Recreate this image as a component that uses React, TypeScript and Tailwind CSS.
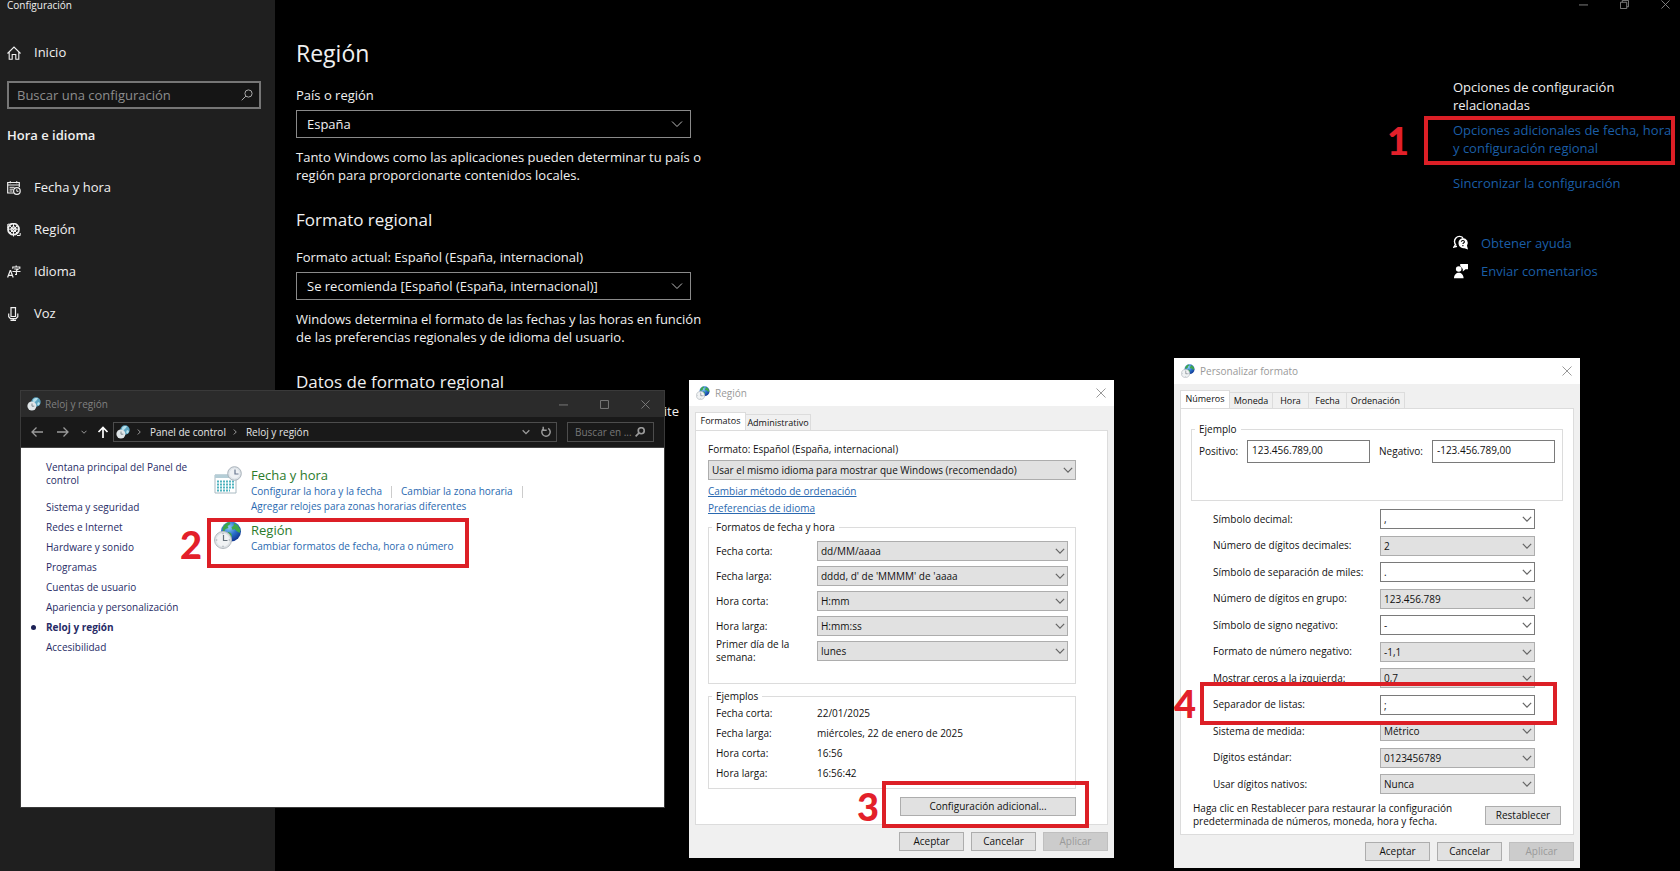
import React from 'react';
import clsx from 'clsx';

interface IconProps {
  className?: string;
}

interface Row {
  id: string;
  label: string;
  value: string;
  editable?: boolean;
}

const dateFormats: Row[] = [
  { id: 'short-date', label: 'Fecha corta:', value: 'dd/MM/aaaa' },
  { id: 'long-date', label: 'Fecha larga:', value: "dddd, d' de 'MMMM' de 'aaaa" },
  { id: 'short-time', label: 'Hora corta:', value: 'H:mm' },
  { id: 'long-time', label: 'Hora larga:', value: 'H:mm:ss' },
  { id: 'first-day', label: 'Primer día de la semana:', value: 'lunes' },
];

const examples = [
  ['Fecha corta:', '22/01/2025'],
  ['Fecha larga:', 'miércoles, 22 de enero de 2025'],
  ['Hora corta:', '16:56'],
  ['Hora larga:', '16:56:42'],
];

const numberFormats: Row[] = [
  { id: 'decimal', label: 'Símbolo decimal:', value: ',', editable: true },
  { id: 'digits', label: 'Número de dígitos decimales:', value: '2' },
  { id: 'thousands', label: 'Símbolo de separación de miles:', value: '.', editable: true },
  { id: 'grouping', label: 'Número de dígitos en grupo:', value: '123.456.789' },
  { id: 'negative-sign', label: 'Símbolo de signo negativo:', value: '-', editable: true },
  { id: 'negative-format', label: 'Formato de número negativo:', value: '-1,1' },
  { id: 'zeros', label: 'Mostrar ceros a la izquierda:', value: '0,7' },
  { id: 'list-separator', label: 'Separador de listas:', value: ';', editable: true },
  { id: 'measure', label: 'Sistema de medida:', value: 'Métrico' },
  { id: 'standard-digits', label: 'Dígitos estándar:', value: '0123456789' },
  { id: 'native-digits', label: 'Usar dígitos nativos:', value: 'Nunca' },
];

const categories = [
  'Sistema y seguridad',
  'Redes e Internet',
  'Hardware y sonido',
  'Programas',
  'Cuentas de usuario',
  'Apariencia y personalización',
  'Reloj y región',
  'Accesibilidad',
];

/* ---------- icons ---------- */

const Chevron: React.FC<IconProps> = ({ className }) => (
  <svg viewBox="0 0 12 12" className={className} fill="none" stroke="currentColor">
    <path d="M1 3.5 6 8.5 11 3.5" />
  </svg>
);

const Search: React.FC<IconProps> = ({ className }) => (
  <svg viewBox="0 0 12 12" className={className} fill="none" stroke="currentColor">
    <circle cx="7.5" cy="4.5" r="3.6" />
    <path d="M4.9 7.1.7 11.3" />
  </svg>
);

const Minimize = () => (
  <svg viewBox="0 0 10 10" className="size-[9px]" fill="none" stroke="currentColor">
    <path d="M0 5.5h10" />
  </svg>
);

const Maximize = () => (
  <svg viewBox="0 0 10 10" className="size-[9px]" fill="none" stroke="currentColor">
    <path d="M.6.6h8.8v8.8H.6z" />
  </svg>
);

const Restore = () => (
  <svg viewBox="0 0 10 10" className="size-[9px]" fill="none" stroke="currentColor">
    <path d="M.5 2.5h7v7h-7zM2.5 2.5v-2h7v7h-2" />
  </svg>
);

const Close: React.FC<IconProps> = ({ className }) => (
  <svg viewBox="0 0 10 10" className={className} fill="none" stroke="currentColor">
    <path d="M.5.5l9 9M9.5.5l-9 9" />
  </svg>
);

const HomeIcon = () => (
  <svg viewBox="0 0 14 14" className="size-3.5" fill="none" stroke="currentColor" strokeWidth="1.1">
    <path d="M.5 7.5 7 1l6.500 6.500M2.2 6v7.200h3V8.500h3.600v4.700h3V6" />
  </svg>
);

const DateIcon = () => (
  <svg viewBox="0 0 14 14" className="size-3.5" fill="none" stroke="currentColor">
    <path d="M6.5 12H.7V1.500h11.600V6M.7 4h11.600M3.300.3v2M9.700.3v2" strokeWidth="1.2" />
    <path d="M2.500 6.300h5M2.500 8.200h3.500M2.500 10h3" />
    <circle cx="9.9" cy="10" r="3.3" strokeWidth="1.2" />
    <path d="M9.8 8.200V10.300h1.700" />
  </svg>
);

const RegionIcon = () => (
  <svg viewBox="0 0 14 14" className="size-3.5" fill="none" stroke="currentColor">
    <circle cx="6.5" cy="6.2" r="5.5" strokeWidth="1.8" />
    <circle cx="6.5" cy="6.2" r="2.4" strokeWidth="1.3" />
    <path d="M1 1.200h4M.8 1v4M2.500 2.500l8 8M10.500 2.500l-8 8M6.500.7v3.300M6.500 8.500v5M1 6.200h3.200M8.800 6.200H12M10 12.500h3.200v-2.500" />
    <circle cx="6.5" cy="6.2" r=".8" fill="currentColor" />
  </svg>
);

const LanguageIcon = () => (
  <svg viewBox="0 0 14 14" className="size-3.5" fill="none" stroke="currentColor" strokeWidth="1.2">
    <path d="M.6 12.500 3.200 5.500h.4L6.200 12.500M1.500 10.300h3.800" />
    <path d="M9.200.5v1.300M5.800 3.700V2h7v1.700M7.200 4h4L9.300 5.500M5.500 6.500h8M9.400 5.500v4H8" />
  </svg>
);

const MicIcon = () => (
  <svg viewBox="0 0 14 14" className="size-3.5" fill="none" stroke="currentColor" strokeWidth="1.2">
    <path d="M4 .7h4.500v8.800H4zM1.700 6.500v3.200l1.800 1.900H9l1.800-1.900V6.500M6.250 11.600v1.900M3.500 13.400H9" />
  </svg>
);

const HelpIcon = () => (
  <svg viewBox="0 0 16 16" className="size-4">
    <path d="M2.500 9.500 1 12l3-.8M3 10A5 5 0 1 1 10 2.800" fill="none" stroke="#fff" strokeWidth="1.4" />
    <path d="M9.800 3a5 5 0 0 1 4.200 7.700l1 3.800-3.500-1.300A5 5 0 1 1 9.800 3z" fill="#fff" />
    <path d="M8.300 6.800c.2-1.800 3.200-1.600 3.100.1-.1 1-1.500 1-1.500 2.200M9.900 10v1.200" fill="none" stroke="#000" strokeWidth="1.1" />
  </svg>
);

const FeedbackIcon = () => (
  <svg viewBox="0 0 16 16" className="size-4" fill="#fff">
    <circle cx="5.7" cy="6" r="2.8" />
    <path d="M1 15.300c0-7.500 9.600-7.500 9.600 0zM7.200 1H15v5.300h-2.500L9.800 8.500V6L7.200 3z" />
  </svg>
);

const Globe: React.FC<IconProps> = ({ className }) => (
  <svg viewBox="0 0 28 28" className={className}>
    <defs>
      <radialGradient id="sea" cx=".4" cy=".3" r=".75">
        <stop offset="0" stopColor="#8fd0f7" />
        <stop offset=".5" stopColor="#2b72cc" />
        <stop offset="1" stopColor="#0b2f8c" />
      </radialGradient>
    </defs>
    <circle cx="17" cy="10.500" r="10" fill="url(#sea)" />
    <path d="M8.500 7c1.500-4 5-6 7-6l1 2-3 2 1 2-3 1-2 4zM20 2l4 2.500 2.500 4.500-1 3-3-2-2-2-2 1-1-3 2-1zM14 11l3 1 1 3-2 3-2-2z" fill="#3fa84a" />
    <circle cx="9" cy="19" r="8.500" fill="#dfe3e6" stroke="#b3b9be" />
    <circle cx="9" cy="19" r="6.500" fill="#f1f3f4" />
    <path d="M9.500 14v5.500h4" fill="none" stroke="#66717a" strokeWidth="1.2" />
    <path d="M9 11.800v1.500M9 24.700v1.500M1.800 19h1.500M14.700 19h1.500" stroke="#9aa3aa" />
  </svg>
);

// muted variant used in the dark window's title and address bar
const ClockGlobe: React.FC<IconProps> = ({ className }) => (
  <svg viewBox="0 0 14 14" className={className}>
    <circle cx="9" cy="5" r="4.7" fill="#5aa3c0" />
    <path d="M6 3c1-2 4-2.500 5-1.500L9 4 6.500 6zM11 5l2 1-1 2.500-2-1z" fill="#b5dfea" />
    <circle cx="4.9" cy="9" r="4.5" fill="#dfe5e8" />
    <path d="M5 6.500V9.200h2.300" fill="none" stroke="#7e8a92" />
  </svg>
);

const CalendarClock = () => (
  <svg viewBox="0 0 28 28" className="size-7">
    <path d="M1 9h21v18H1z" fill="#fff" stroke="#a9bac2" />
    <path d="M1 8.500h21v3.500H1z" fill="#b4cdd6" />
    <path d="M3 15.500h17M3 18.500h17M3 21.500h17M3 24.500h13" stroke="#4fb3bf" strokeWidth="2" strokeDasharray="2 1" />
    <circle cx="20.5" cy="7.5" r="6.8" fill="#dde3e8" stroke="#a9b2ba" />
    <circle cx="20.5" cy="7.5" r="5" fill="#eef1f4" />
    <path d="M21 3.500V8h3.500" fill="none" stroke="#6a7890" strokeWidth="1.2" />
  </svg>
);

const Refresh = () => (
  <svg viewBox="0 0 12 12" className="size-3" fill="none" stroke="currentColor" strokeWidth="1.5">
    <path d="M4 2.300a4.200 4.200 0 1 0 4.200.1M3.200.8v3.400h3.500" />
  </svg>
);

/* ---------- shared parts ---------- */

interface CalloutProps {
  number: string;
  box: string;
  label: string;
}

const Callout: React.FC<CalloutProps> = ({ number, box, label }) => (
  <>
    <span className={clsx('pointer-events-none absolute z-10 border-4 border-[#dc1f26]', box)} />
    <span className={clsx("pointer-events-none absolute z-10 font-['Lato',sans-serif] text-[38px] leading-[38px] font-black text-[#e3202a]", label)}>
      {number}
    </span>
  </>
);

interface SelectProps {
  id: string;
  value: string;
  editable?: boolean;
}

const DialogSelect: React.FC<SelectProps> = ({ id, value, editable }) => (
  <div className="relative">
    <select
      id={id}
      className={clsx(
        'block h-5 w-full appearance-none border pr-5 pl-[3px] leading-[18px]',
        editable ? 'border-[#7a7a7a] bg-white' : 'border-[#adadad] bg-[#e1e1e1]'
      )}
    >
      <option>{value}</option>
    </select>
    <Chevron className="pointer-events-none absolute top-[5px] right-[3px] size-2.5 stroke-[1.5] text-[#666]" />
  </div>
);

const SettingsSelect: React.FC<SelectProps> = ({ id, value }) => (
  <div className="relative mt-1.5">
    <select id={id} className="block h-7 w-full appearance-none border border-[#8a8a8a] bg-black pr-8 pl-2.5 leading-[26px]">
      <option>{value}</option>
    </select>
    <Chevron className="pointer-events-none absolute top-2 right-2 size-3 text-[#bbb]" />
  </div>
);

interface DialogProps {
  title: string;
  tabs: { name: string; width: string }[];
  className: string;
  children: React.ReactNode;
  callout: React.ReactNode;
}

const Dialog: React.FC<DialogProps> = ({ title, tabs, className, children, callout }) => (
  <section className={clsx('absolute flex flex-col bg-[#f0f0f0] text-[10px] leading-[13px] text-[#111]', className)}>
    <header className="flex h-[26px] items-center gap-[5px] bg-white pr-2 pl-[7px] text-[#999]">
      <Globe className="size-3.5" />
      <h2 className="flex-1">{title}</h2>
      <button aria-label="Cerrar">
        <Close className="size-2.5" />
      </button>
    </header>
    <div role="tablist" className="mt-1.5 flex items-end px-1.5 text-[9px]">
      {tabs.map((tab, i) => (
        <button
          key={tab.name}
          role="tab"
          aria-selected={i === 0}
          className={clsx(
            'border border-b-0 border-[#dcdcdc]',
            tab.width,
            i === 0 ? '-mb-px h-[19px] bg-white pb-1' : 'h-4 border-l-0 bg-[#f0f0f0]'
          )}
        >
          {tab.name}
        </button>
      ))}
    </div>
    <div className="mx-1.5 flex flex-1 flex-col border border-[#dcdcdc] bg-white">{children}</div>
    <footer className="flex justify-end gap-[7px] px-1.5 py-[7px]">
      <button className="h-[19px] w-[65px] border border-[#adadad] bg-[#e1e1e1]">Aceptar</button>
      <button className="h-[19px] w-[65px] border border-[#adadad] bg-[#e1e1e1]">Cancelar</button>
      <button disabled className="h-[19px] w-[65px] border border-[#bfbfbf] bg-[#cccccc] text-[#9a9a9a]">
        Aplicar
      </button>
    </footer>
    {callout}
  </section>
);

/* ---------- windows ---------- */

const Sidebar = () => (
  <aside className="w-[275px] shrink-0 bg-[#1f1f1f] px-[7px]">
    <h2 className="h-2.5 text-[10px] leading-2.5">Configuración</h2>
    <a href="#inicio" className="mt-8 flex h-[22px] items-center gap-[13px]">
      <HomeIcon />
      Inicio
    </a>
    <div className="relative mt-[17px] mr-[7px]">
      <input
        aria-label="Buscar una configuración"
        placeholder="Buscar una configuración"
        className="block h-7 w-full border-2 border-[#767676] bg-[#151515] pl-2 placeholder:text-[#8d8d8d]"
      />
      <Search className="absolute top-2 right-2 size-3 text-[#aaa]" />
    </div>
    <h3 className="mt-[17px] leading-[18px] font-semibold">Hora e idioma</h3>
    <nav className="mt-[23px]">
      {[
        { label: 'Fecha y hora', icon: <DateIcon /> },
        { label: 'Región', icon: <RegionIcon /> },
        { label: 'Idioma', icon: <LanguageIcon /> },
        { label: 'Voz', icon: <MicIcon /> },
      ].map((item) => (
        <a key={item.label} href="#seccion" className="flex h-[42px] items-center gap-[13px]">
          {item.icon}
          {item.label}
        </a>
      ))}
    </nav>
  </aside>
);

const RegionSettings = () => (
  <main className="w-[395px] pt-9 leading-[18px]">
    <h1 className="text-[23px] leading-[34px]">Región</h1>
    <label htmlFor="country" className="mt-4 block">
      País o región
    </label>
    <SettingsSelect id="country" value="España" />
    <p className="-mr-4 mt-2.5">
      Tanto Windows como las aplicaciones pueden determinar tu país o región para proporcionarte contenidos locales.
    </p>
    <h2 className="mt-6 text-[17px] leading-6">Formato regional</h2>
    <label htmlFor="format" className="mt-4 block">
      Formato actual: Español (España, internacional)
    </label>
    <SettingsSelect id="format" value="Se recomienda [Español (España, internacional)]" />
    <p className="-mr-4 mt-2.5">
      Windows determina el formato de las fechas y las horas en función de las preferencias regionales y de idioma del usuario.
    </p>
    <h2 className="mt-6 text-[17px] leading-6">Datos de formato regional</h2>
    <p className="mt-2 pr-3 text-right">ite</p>
  </main>
);

const RelatedSettings = () => (
  <aside className="relative ml-auto w-[227px] leading-[18px]">
    <div className="flex items-center justify-end gap-8 pr-2.5 text-[#8a8a8a]">
      <button aria-label="Minimizar">
        <Minimize />
      </button>
      <button aria-label="Restaurar">
        <Restore />
      </button>
      <button aria-label="Cerrar">
        <Close className="size-[9px]" />
      </button>
    </div>
    <h2 className="mt-[69px] pr-10">Opciones de configuración relacionadas</h2>
    <div className="text-[#1b5ea6]">
      <a href="#opciones" className="mt-[7px] block pr-2">
        Opciones adicionales de fecha, hora y configuración regional
      </a>
      <a href="#sincronizar" className="mt-[17px] block">
        Sincronizar la configuración
      </a>
      <a href="#ayuda" className="mt-[42px] flex items-center gap-3">
        <HelpIcon />
        Obtener ayuda
      </a>
      <a href="#comentarios" className="mt-2.5 flex items-center gap-3">
        <FeedbackIcon />
        Enviar comentarios
      </a>
    </div>
    <Callout number="1" box="top-[116px] right-[5px] h-[49px] w-[251px]" label="top-[121px] -left-[66px]" />
  </aside>
);

const ControlPanel = () => (
  <section className="absolute top-[390px] left-5 flex h-[418px] w-[645px] flex-col border border-[#3a3a3a] bg-white text-[10px] leading-[13px]">
    <header className="flex h-[26px] items-center gap-1 bg-[#2b2b2b] pr-3.5 pl-1.5 text-[#808080]">
      <ClockGlobe className="size-3.5" />
      <h2 className="flex-1">Reloj y región</h2>
      <div className="flex gap-8">
        <button aria-label="Minimizar">
          <Minimize />
        </button>
        <button aria-label="Maximizar">
          <Maximize />
        </button>
        <button aria-label="Cerrar">
          <Close className="size-[9px]" />
        </button>
      </div>
    </header>
    <div className="flex h-[31px] items-center border-b border-[#444] bg-[#191919] px-2.5 text-[#9a9a9a]">
      <button aria-label="Atrás">
        <svg viewBox="0 0 12 12" className="size-3" fill="none" stroke="currentColor" strokeWidth="1.3">
          <path d="M12 6H1M5.5 1.5 1 6l4.500 4.500" />
        </svg>
      </button>
      <button aria-label="Adelante" className="ml-3.5">
        <svg viewBox="0 0 12 12" className="size-3" fill="none" stroke="currentColor" strokeWidth="1.3">
          <path d="M0 6h11M6.500 1.500 11 6l-4.500 4.500" />
        </svg>
      </button>
      <button aria-label="Recientes" className="ml-3">
        <Chevron className="size-1.5 stroke-2" />
      </button>
      <button aria-label="Subir" className="ml-2.5 text-white">
        <svg viewBox="0 0 12 12" className="size-3" fill="none" stroke="currentColor" strokeWidth="1.7">
          <path d="M6 12V1.500M1.500 6 6 1.500 10.500 6" />
        </svg>
      </button>
      <div className="ml-1 flex h-5 flex-1 items-center border border-[#4d4d4d] pr-1 pl-0.5">
        <ClockGlobe className="size-3.5" />
        <Chevron className="mx-1.5 size-1.5 -rotate-90 stroke-2" />
        <a href="#panel" className="ml-0.5 text-[#e6e6e6]">
          Panel de control
        </a>
        <Chevron className="mx-1.5 size-1.5 -rotate-90 stroke-2" />
        <a href="#reloj" className="ml-0.5 flex-1 text-[#e6e6e6]">
          Reloj y región
        </a>
        <Chevron className="mr-2.5 size-2 stroke-2" />
        <Refresh />
      </div>
      <div className="ml-2.5 flex h-5 w-[87px] items-center border border-[#4d4d4d] pr-2 pl-[7px]">
        <input aria-label="Buscar" placeholder="Buscar en ..." className="w-full min-w-0 placeholder:text-[#777]" />
        <Search className="size-2.5 shrink-0 stroke-2" />
      </div>
    </div>
    <div className="flex flex-1">
      <nav className="w-[193px] pt-[13px] pl-[25px] text-[#272b66]">
        <a href="#principal" className="block w-[150px]">
          Ventana principal del Panel de control
        </a>
        <ul className="mt-2.5">
          {categories.map((name) => (
            <li key={name} className={clsx('relative h-5 leading-5', name === 'Reloj y región' && 'font-bold')}>
              {name === 'Reloj y región' && <span className="absolute top-2 -left-[15px] size-[5px] rounded-full bg-[#1c2156]" />}
              <a href="#categoria">{name}</a>
            </li>
          ))}
        </ul>
      </nav>
      <div className="pt-[18px] text-[#2a69b0]">
        <div className="flex gap-[9px]">
          <CalendarClock />
          <div>
            <h3 className="text-[13px] leading-[18px] text-[#2b7a2b]">Fecha y hora</h3>
            <div className="flex items-center leading-[15px]">
              <a href="#configurar">Configurar la hora y la fecha</a>
              <span className="mx-[9px] h-3 w-px bg-[#ccc]" />
              <a href="#zona">Cambiar la zona horaria</a>
              <span className="mx-[9px] h-3 w-px bg-[#ccc]" />
            </div>
            <a href="#agregar" className="block leading-[15px]">
              Agregar relojes para zonas horarias diferentes
            </a>
          </div>
        </div>
        <div className="mt-[7px] flex gap-[9px]">
          <Globe className="size-7" />
          <div>
            <h3 className="text-[13px] leading-[18px] text-[#2b7a2b]">Región</h3>
            <a href="#formatos" className="block leading-[15px]">
              Cambiar formatos de fecha, hora o número
            </a>
          </div>
        </div>
      </div>
    </div>
    <Callout number="2" box="top-[127px] left-[186px] h-[50px] w-[262px]" label="top-[134px] left-[159px]" />
  </section>
);

const RegionDialog = () => (
  <Dialog
    title="Región"
    tabs={[
      { name: 'Formatos', width: 'w-[51px]' },
      { name: 'Administrativo', width: 'w-[65px]' },
    ]}
    className="top-[380px] left-[689px] h-[478px] w-[425px]"
    callout={<Callout number="3" box="top-[401px] left-[193px] h-[47px] w-[207px]" label="top-[407px] left-[168px]" />}
  >
    <div className="pt-3 pr-[31px] pl-3">
      <label htmlFor="language" className="mb-1 block">
        Formato: Español (España, internacional)
      </label>
      <DialogSelect id="language" value="Usar el mismo idioma para mostrar que Windows (recomendado)" />
      <a href="#ordenacion" className="mt-[5px] block text-[#2a69b0] underline">
        Cambiar método de ordenación
      </a>
      <a href="#preferencias" className="mt-1 block text-[#2a69b0] underline">
        Preferencias de idioma
      </a>
      <fieldset className="mt-1.5 border border-[#dcdcdc] px-[7px] pb-[22px]">
        <legend className="-ml-1 px-1">Formatos de fecha y hora</legend>
        <div className="mt-[7px] flex flex-col gap-[5px]">
          {dateFormats.map((row) => (
            <div key={row.id} className="grid h-5 grid-cols-[101px_1fr] grid-rows-[20px] items-center">
              <label htmlFor={row.id} className="w-[88px]">
                {row.label}
              </label>
              <DialogSelect id={row.id} value={row.value} />
            </div>
          ))}
        </div>
      </fieldset>
      <fieldset className="mt-1.5 border border-[#dcdcdc] px-[7px] pb-[5px]">
        <legend className="-ml-1 px-1">Ejemplos</legend>
        <dl className="grid grid-cols-[101px_1fr] leading-5">
          {examples.map(([label, value]) => (
            <React.Fragment key={label}>
              <dt>{label}</dt>
              <dd>{value}</dd>
            </React.Fragment>
          ))}
        </dl>
      </fieldset>
      <button className="mt-2 ml-auto block h-[19px] w-44 border border-[#adadad] bg-[#e1e1e1]">Configuración adicional...</button>
    </div>
  </Dialog>
);

const FormatDialog = () => (
  <Dialog
    title="Personalizar formato"
    tabs={[
      { name: 'Números', width: 'w-[50px]' },
      { name: 'Moneda', width: 'w-[43px]' },
      { name: 'Hora', width: 'w-9' },
      { name: 'Fecha', width: 'w-[38px]' },
      { name: 'Ordenación', width: 'w-[58px]' },
    ]}
    className="top-[358px] left-[1174px] h-[510px] w-[406px]"
    callout={<Callout number="4" box="top-[324px] left-[26px] h-[43px] w-[357px]" label="top-[326px] left-0" />}
  >
    <fieldset className="mx-2.5 mt-3.5 h-[78px] border border-[#dcdcdc] px-[7px]">
      <legend className="-ml-1 px-1">Ejemplo</legend>
      <div className="mt-1 flex items-center justify-between">
        <label htmlFor="positive">Positivo:</label>
        <input id="positive" readOnly value="123.456.789,00" className="h-[23px] w-[123px] border border-[#7a7a7a] pb-1 pl-1" />
        <label htmlFor="negative">Negativo:</label>
        <input id="negative" readOnly value="-123.456.789,00" className="h-[23px] w-[123px] border border-[#7a7a7a] pb-1 pl-1" />
      </div>
    </fieldset>
    <div className="mt-2 flex flex-1 flex-col justify-between pr-[38px] pl-8">
      {numberFormats.map((row) => (
        <div key={row.id} className="grid grid-cols-[1fr_155px] items-center">
          <label htmlFor={row.id}>{row.label}</label>
          <DialogSelect id={row.id} value={row.value} editable={row.editable} />
        </div>
      ))}
    </div>
    <div className="flex items-center justify-between px-3 pt-2 pb-1.5">
      <p className="w-[270px]">Haga clic en Restablecer para restaurar la configuración predeterminada de números, moneda, hora y fecha.</p>
      <button className="h-[19px] w-[76px] border border-[#adadad] bg-[#e1e1e1]">Restablecer</button>
    </div>
  </Dialog>
);

const App = () => (
  <div className="relative flex min-h-screen gap-[21px] overflow-hidden bg-black font-['Open_Sans',sans-serif] text-[13px] text-[#f0f0f0]">
    <Sidebar />
    <RegionSettings />
    <RelatedSettings />
    <ControlPanel />
    <RegionDialog />
    <FormatDialog />
  </div>
);

export default App;
